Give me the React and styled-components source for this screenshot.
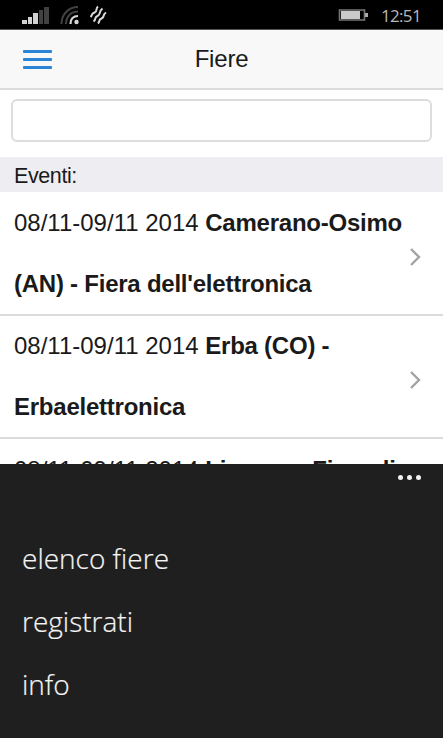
import React from "react";
import styled, { createGlobalStyle } from "styled-components";

const GlobalStyle = createGlobalStyle`
* { box-sizing: border-box; }
body { margin: 0; background: #1f1f1f; }
`;

const Screen = styled.div`
display: flex;
flex-direction: column;
width: 443px;
height: 738px;
overflow: hidden;
background: #fff;
color: #1a1a1a;
font-family: "Liberation Sans", Arial, sans-serif;
`;

const StatusBar = styled.div`
display: flex;
flex: none;
justify-content: space-between;
height: 30px;
padding: 1px 22px 0 21px;
background: #000;
border-bottom: 1px solid #555;
`;

const StatusGroup = styled.div`
display: flex;
align-items: center;
gap: ${({ gap }) => gap}px;
`;

const Time = styled.span`
padding-top: 1px;
color: #b8b8b8;
font: 400 17px/28px "Open Sans", "Noto Sans", sans-serif;
letter-spacing: -0.65px;
`;

const Header = styled.header`
display: grid;
flex: none;
grid-template-columns: 60px 1fr 60px;
align-items: center;
height: 60px;
background: #f8f8f8;
border-bottom: 2px solid #dcdcdc;
`;

const MenuButton = styled.button`
display: flex;
flex-direction: column;
gap: 5px;
width: 29px;
margin-left: 23px;
padding: 0;
background: none;
border: 0;
`;

const MenuLine = styled.span`
width: 29px;
height: 3px;
border-radius: 1px;
background: #2a83d5;
`;

const Title = styled.h1`
margin: 0;
padding-bottom: 1px;
font-size: 24px;
font-weight: 400;
line-height: 27px;
letter-spacing: -0.2px;
text-align: center;
`;

const SearchBar = styled.div`
flex: none;
height: 67px;
padding: 9px 11px 0;
`;

const SearchInput = styled.input`
display: block;
width: 100%;
height: 43px;
padding: 0 10px;
background: #fff;
border: 2px solid #ddd;
border-radius: 6px;
font: inherit;
font-size: 22px;
outline: none;
`;

const SectionTitle = styled.div`
flex: none;
height: 35px;
padding-left: 14px;
background: #eeedf2;
font-size: 21.5px;
line-height: 38px;
letter-spacing: -0.4px;
`;

const EventList = styled.div`
flex: 1;
min-height: 0;
padding-top: 1px;
overflow: hidden;
`;

const EventText = styled.div`
flex: 1;
padding-bottom: 2px;
font-size: 24px;
line-height: 61px;
white-space: nowrap;
`;

const EventRow = styled.div`
display: flex;
align-items: center;
height: 123px;
padding: 0 22px 0 14px;
border-bottom: 2px solid #dcdcdc;

&:last-child ${EventText} {
  padding-bottom: 0;
}
`;

const EventTitle = styled.b`
letter-spacing: -0.24px;
`;

const AppBar = styled.nav`
flex: none;
height: 274px;
background: #1f1f1f;
`;

const MoreButton = styled.button`
display: flex;
justify-content: flex-end;
gap: 4px;
width: 100%;
height: 64px;
padding: 11px 22px 0 0;
background: none;
border: 0;
`;

const Dot = styled.span`
width: 5px;
height: 5px;
border-radius: 50%;
background: #f2f2f2;
`;

const AppBarItem = styled.div`
height: 63px;
padding-left: 22px;
color: #f4f4f4;
font: 300 28px/60px "Open Sans", "Noto Sans", sans-serif;
-webkit-text-stroke: 0.2px #f4f4f4;
`;

const SignalIcon = () => (
  <svg width="29" height="20" viewBox="0 0 29 20">
    <path fill="#d2d2d2" d="M1 15h5v4H1zM7 12h4v7H7zM12 8h5v11h-5z" />
    <path fill="#414141" d="M18 5h4v14h-4zM23 2h5v17h-5z" />
  </svg>
);

const WifiIcon = () => (
  <svg width="20" height="20" viewBox="0 0 20 20" fill="none" strokeWidth="2">
    <path stroke="#424242" d="M1.500 19C1.500 9 9 2 18 2M6 19C6 11.500 11 6.500 18 6.500" />
    <path stroke="#d8d8d8" strokeWidth="2.200" d="M10.500 19c0-5 3-8 7.500-8" />
    <circle cx="16.500" cy="17" r="2.200" fill="#d8d8d8" />
  </svg>
);

// three parallel wavy strokes
const VibrateIcon = () => (
  <svg
    width="17"
    height="20"
    viewBox="0 0 17 20"
    fill="none"
    stroke="#dadada"
    strokeWidth="2"
    strokeLinejoin="round"
  >
    <path d="M8 1.500C5 4 8 6 4.500 7.500S2.500 10 0.500 12" />
    <path d="M12.500 3.500C8 7 11.500 9 7.500 11S7 14 3.500 16.500" />
    <path d="M16 7.500C12 10 15 12 11.500 13.500S10.500 16 8 18.500" />
  </svg>
);

const BatteryIcon = () => (
  <svg width="31" height="14" viewBox="0 0 31 14">
    <path fill="none" stroke="#777" strokeWidth="1.600" d="M1.500 2h25v10h-25z" />
    <path fill="#c9c9c9" d="M3 3h19v8H3z" />
    <path fill="#aaa" d="M27 5h3v4h-3z" />
  </svg>
);

const Chevron = () => (
  <svg width="12" height="26" viewBox="0 0 12 26">
    <path d="M2 8l8 8-8 8" fill="none" stroke="#a3a3a3" strokeWidth="2.400" />
  </svg>
);

const events = [
  { date: "08/11-09/11 2014", title: ["Camerano-Osimo", "(AN) - Fiera dell'elettronica"] },
  { date: "08/11-09/11 2014", title: ["Erba (CO) -", "Erbaelettronica"] },
  { date: "08/11-09/11 2014", title: ["Livorno - Fiera di", ""] },
];

const menuItems = ["elenco fiere", "registrati", "info"];

const App = () => {
  return (
    <>
      <GlobalStyle />
      <Screen>
        <StatusBar>
          <StatusGroup gap={10}>
            <SignalIcon />
            <WifiIcon />
            <VibrateIcon />
          </StatusGroup>
          <StatusGroup gap={12}>
            <BatteryIcon />
            <Time>12:51</Time>
          </StatusGroup>
        </StatusBar>
        <Header>
          <MenuButton aria-label="Menu">
            <MenuLine />
            <MenuLine />
            <MenuLine />
          </MenuButton>
          <Title>Fiere</Title>
        </Header>
        <SearchBar>
          <SearchInput aria-label="Cerca" />
        </SearchBar>
        <SectionTitle>Eventi:</SectionTitle>
        <EventList>
          {events.map(({ date, title }) => (
            <EventRow key={title[0]}>
              <EventText>
                {date} <EventTitle>{title[0]}</EventTitle>
                <br />
                <EventTitle>{title[1]}</EventTitle>&nbsp;
              </EventText>
              <Chevron />
            </EventRow>
          ))}
        </EventList>
        <AppBar>
          <MoreButton aria-label="Altro">
            <Dot />
            <Dot />
            <Dot />
          </MoreButton>
          {menuItems.map((label) => (
            <AppBarItem key={label}>{label}</AppBarItem>
          ))}
        </AppBar>
      </Screen>
    </>
  );
};

export default App;
